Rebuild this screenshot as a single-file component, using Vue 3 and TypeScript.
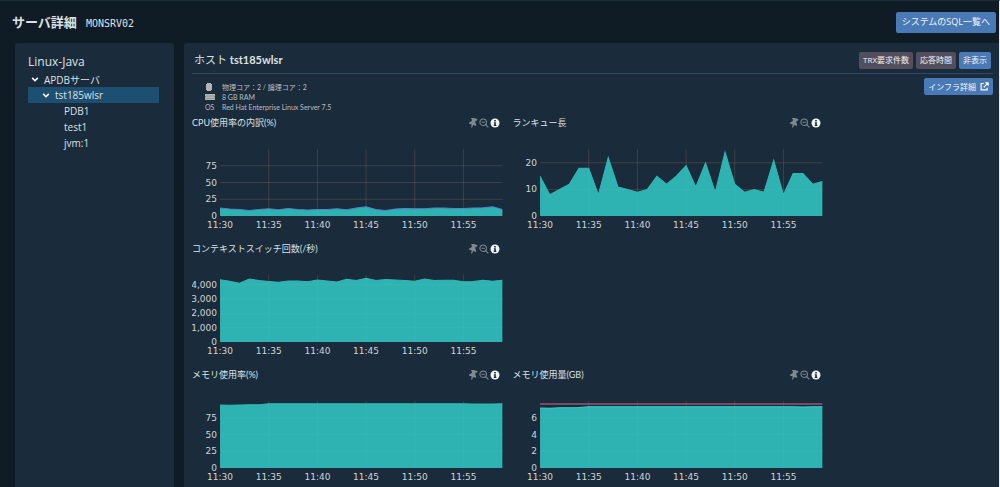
<script setup lang="ts">
interface Chart {
  id: string
  title: string
  ticks: number[]
  max: number
  values: number[]
  stroke: string
  limit?: number
  startsRow?: boolean
}

const memory = [94, 93.6, 94.2, 94.4, 94.5, 96, 96, 96, 96, 96, 96, 96, 96, 96, 96, 96, 96, 96, 96, 96, 96, 95.8, 95.8, 95.9, 96, 95.8, 95.6, 95.4, 95.6, 95.8]

const charts: Chart[] = [
  {
    id: 'cpu',
    title: 'CPU使用率の内訳(%)',
    ticks: [0, 25, 50, 75],
    max: 100,
    values: [12, 10.5, 10, 8.5, 10, 11, 9.5, 11.5, 10, 9, 10, 10, 11, 9.5, 12, 14, 10, 8.5, 10.5, 11.5, 11, 11, 12, 12, 11.5, 11.5, 12, 12.5, 14, 10],
    stroke: '#4f86c6',
  },
  {
    id: 'queue',
    title: 'ランキュー長',
    ticks: [0, 10, 20],
    max: 25.2,
    values: [15, 8, 10, 12, 18, 18, 8, 22, 11, 10, 9, 10, 15, 12, 15, 19, 11, 20, 9, 24, 12, 9, 10, 9, 21, 8, 16, 16, 12, 13],
    stroke: '#2fb7b6',
  },
  {
    id: 'context',
    title: 'コンテキストスイッチ回数(/秒)',
    ticks: [0, 1000, 2000, 3000, 4000],
    max: 4680,
    values: [4350, 4250, 4100, 4400, 4300, 4230, 4170, 4270, 4270, 4220, 4340, 4270, 4200, 4390, 4300, 4450, 4300, 4370, 4340, 4300, 4250, 4400, 4300, 4310, 4320, 4220, 4230, 4310, 4250, 4320],
    stroke: '#2fb7b6',
  },
  {
    id: 'memory-rate',
    title: 'メモリ使用率(%)',
    ticks: [0, 25, 50, 75],
    max: 100,
    values: memory,
    stroke: '#2fb7b6',
    startsRow: true,
  },
  {
    id: 'memory-size',
    title: 'メモリ使用量(GB)',
    ticks: [0, 2, 4, 6],
    max: 8,
    values: memory.map((v) => (v * 7.64) / 100),
    stroke: '#35d3d0',
    limit: 7.64,
  },
]

const LEFT = 28
const RIGHT = 310
const TOP = 18
const BASE = 85
const step = (RIGHT - LEFT) / 29

const times = ['11:30', '11:35', '11:40', '11:45', '11:50', '11:55']
const timeX = (i: number) => LEFT + i * 5 * step
const valueY = (c: Chart, v: number) => BASE - (v / c.max) * (BASE - TOP)
const line = (c: Chart) =>
  c.values.map((v, i) => `${(LEFT + i * step).toFixed(1)},${valueY(c, v).toFixed(1)}`).join(' ')
const area = (c: Chart) => `${LEFT},${BASE} ${line(c)} ${RIGHT},${BASE}`
</script>

<template>
  <div class="page">
    <header class="top">
      <h1>サーバ詳細</h1>
      <span class="server">MONSRV02</span>
      <button type="button" class="btn large">システムのSQL一覧へ</button>
    </header>

    <div class="body">
      <nav class="side" aria-label="サーバ">
        <h2>Linux-Java</h2>
        <ul class="tree">
          <li>
            <a href="#apdb" class="node l1">
              <svg class="chev" viewBox="0 0 10 8" aria-hidden="true"><path d="M1.500 2 5 5.500 8.500 2" /></svg>APDBサーバ
            </a>
          </li>
          <li>
            <a href="#host" class="node l2 selected" aria-current="true">
              <svg class="chev" viewBox="0 0 10 8" aria-hidden="true"><path d="M1.500 2 5 5.500 8.500 2" /></svg>tst185wlsr
            </a>
          </li>
          <li><a href="#pdb1" class="node l3">PDB1</a></li>
          <li><a href="#test1" class="node l3">test1</a></li>
          <li><a href="#jvm1" class="node l3">jvm:1</a></li>
        </ul>
      </nav>

      <main class="panel">
        <div class="host">
          <h2>ホスト <b>tst185wlsr</b></h2>
          <div class="group">
            <button type="button" class="btn muted">TRX要求件数</button>
            <button type="button" class="btn muted">応答時間</button>
            <button type="button" class="btn">非表示</button>
          </div>
        </div>

        <div class="info">
          <ul class="specs">
            <li>
              <span class="mark"><svg viewBox="0 0 8 8" class="spec-icon" aria-hidden="true"><path d="M2 0h4v1h1v6H6v1H2V7H1V1h1z" /></svg></span>
              物理コア：2 / 論理コア：2
            </li>
            <li>
              <span class="mark"><svg viewBox="0 0 10 8" class="spec-icon wide" aria-hidden="true"><path d="M0 1h10v2l-.6.7.6.7V7H0V4.400l.6-.7L0 3z" /><path class="chip" d="M2 2v2M4 2v2M6 2v2M8 2v2M0 5.500h10" /></svg></span>
              8 GB RAM
            </li>
            <li><span class="mark">OS</span>Red Hat Enterprise Linux Server 7.5</li>
          </ul>
          <button type="button" class="btn infra">
            インフラ詳細
            <svg class="ext" viewBox="0 0 12 12" aria-hidden="true"><path d="M5 2H1.500v8.500h8V7.500M7 1.200h3.800V5M10.500 1.500 5 7" /></svg>
          </button>
        </div>

        <div class="charts">
          <section v-for="c in charts" :key="c.id" class="chart" :class="{ first: c.startsRow }">
            <div class="chart-head">
              <h3>{{ c.title }}</h3>
              <button type="button" class="tool" aria-label="固定">
                <svg viewBox="0 0 512 512" class="icon"><path transform="rotate(18 256 256) translate(64 0)" d="M298 214 286 96h42c13 0 24-11 24-24V24c0-13-11-24-24-24H56C43 0 32 11 32 24v48c0 13 11 24 24 24h42L86 214C37 237 0 277 0 328c0 13 11 24 24 24h136v104l25 52c3 5 11 5 14 0l25-52V352h136c13 0 24-11 24-24 0-51-38-91-86-114z" /></svg>
              </button>
              <button type="button" class="tool" aria-label="縮小">
                <svg viewBox="0 0 12 12" class="icon zoom"><circle cx="5" cy="5" r="3.900" /><path d="M8 8l3.300 3.300M3.200 5h3.600" /></svg>
              </button>
              <button type="button" class="tool" aria-label="情報">
                <svg viewBox="0 0 12 12" class="icon about"><circle cx="6" cy="6" r="5.400" /><path d="M5 2.500h2v1.700H5zM4.600 5H7v3.200h.6v1.300H4.500V8.200h.6V6.200h-.5z" /></svg>
              </button>
            </div>
            <svg class="plot" viewBox="0 0 320 98" role="img" :aria-label="c.title">
              <line v-for="t in c.ticks.slice(1)" :key="'h' + t" class="grid" :x1="LEFT" :x2="RIGHT" :y1="valueY(c, t)" :y2="valueY(c, t)" />
              <line v-for="i in 5" :key="'v' + i" class="grid" :x1="timeX(i)" :x2="timeX(i)" :y1="TOP" :y2="BASE" />
              <polygon class="area" :points="area(c)" />
              <polyline class="edge" :points="line(c)" :stroke="c.stroke" />
              <line v-if="c.limit" class="limit" :x1="LEFT" :x2="RIGHT" :y1="valueY(c, c.limit)" :y2="valueY(c, c.limit)" />
              <text v-for="t in c.ticks" :key="'y' + t" class="tick y" :x="LEFT - 3" :y="valueY(c, t) + 3">{{ t.toLocaleString('en-US') }}</text>
              <text v-for="(t, i) in times" :key="t" class="tick x" :x="timeX(i)" :y="BASE + 12">{{ t }}</text>
            </svg>
          </section>
        </div>
      </main>
    </div>
  </div>
</template>

<style>
body {
  margin: 0;
  background: #101c25;
}
</style>

<style scoped>
.page {
  box-sizing: border-box;
  min-height: 100vh;
  display: flex;
  flex-direction: column;
  border-top: 1px solid #1a2c3b;
  border-right: 1px solid #e8ecee;
  background: #101c25;
  color: #dde1e4;
  font-family: "Open Sans", "Noto Sans CJK JP", sans-serif;
}
h1, h2, h3, ul {
  margin: 0;
  padding: 0;
  font-weight: 400;
  list-style: none;
}
.top {
  height: 42px;
  display: flex;
  align-items: center;
  padding: 0 3px 0 12px;
}
h1 {
  font-size: 13px;
  font-weight: 700;
  line-height: 20px;
}
.server {
  flex: 1;
  margin-left: 9px;
  padding-top: 3px;
  font: 10px/16px "DejaVu Sans Mono", monospace;
}
.btn {
  display: inline-flex;
  align-items: center;
  height: 17px;
  padding: 0 4px;
  border: 0;
  border-radius: 2px;
  background: #4a7ab5;
  color: #f2f5f8;
  font: 8px/16px "Open Sans", "Noto Sans CJK JP", sans-serif;
  white-space: nowrap;
}
.btn.muted {
  background: #524e5e;
}
.btn.large {
  height: 21px;
  padding: 0 6px;
  font-size: 9px;
}
.body {
  flex: 1;
  display: flex;
  gap: 10px;
}
.side {
  box-sizing: border-box;
  flex: 0 0 159px;
  margin-left: 15px;
  padding: 10px 15px 10px 13px;
  background: #1a2c3b;
  border-radius: 3px 3px 0 0;
}
.side h2 {
  font-size: 12px;
  line-height: 18px;
}
.node {
  display: flex;
  align-items: center;
  height: 16px;
  color: inherit;
  font-size: 10px;
  text-decoration: none;
}
.l1 { padding-left: 3px; }
.l2 { padding-left: 14px; }
.l3 { padding-left: 36px; }
.selected {
  background: #1c4f71;
}
.chev {
  width: 8px;
  height: 7px;
  margin-right: 5px;
  fill: none;
  stroke: #fff;
  stroke-width: 2;
}
.panel {
  flex: 1;
  min-width: 0;
  padding: 0 6px 0 8px;
  background: #1a2c3b;
  border-radius: 3px 0 0 0;
}
.host {
  display: flex;
  align-items: center;
  height: 31px;
  padding: 4px 2px 0 2px;
  box-sizing: border-box;
  border-bottom: 1px solid #2f4764;
}
.host h2 {
  flex: 1;
  font-family: Lato, "Noto Sans CJK JP", sans-serif;
  font-size: 11px;
  line-height: 16px;
}
.host b {
  font-weight: 700;
}
.group {
  display: flex;
  gap: 3px;
}
.info {
  display: flex;
  align-items: flex-start;
  justify-content: space-between;
  height: 41px;
}
.specs {
  padding: 8px 0 0 13px;
  font-family: Lato, "Noto Sans CJK JP", sans-serif;
  font-size: 7px;
  line-height: 10px;
  color: #b9bfc4;
}
.specs li {
  display: flex;
}
.mark {
  display: flex;
  align-items: center;
  width: 17px;
}
.spec-icon {
  width: 8px;
  height: 8px;
  fill: #b4b4b2;
}
.spec-icon.wide {
  width: 10px;
}
.chip {
  fill: none;
  stroke: #7d868c;
  stroke-width: 0.6;
}
.infra {
  gap: 4px;
  margin-top: 4px;
}
.ext {
  width: 9px;
  height: 9px;
  fill: none;
  stroke: #fff;
  stroke-width: 1.6;
}
.charts {
  display: grid;
  grid-template-columns: 40% 40%;
  row-gap: 12px;
}
.first {
  grid-column-start: 1;
}
.chart-head {
  display: flex;
  align-items: center;
  height: 16px;
  padding-right: 12px;
}
h3 {
  flex: 1;
  font-family: Lato, "Noto Sans CJK JP", sans-serif;
  font-size: 9px;
  line-height: 16px;
}
.tool {
  display: flex;
  padding: 0;
  margin-left: 1px;
  border: 0;
  background: none;
}
.icon {
  width: 10px;
  height: 10px;
  fill: #7f898f;
}
.zoom {
  fill: none;
  stroke: #7f898f;
  stroke-width: 1.3;
}
.about {
  fill: #f2f5f6;
}
.about path {
  fill: #1a2c3b;
}
.plot {
  display: block;
  width: 100%;
  height: auto;
}
.area {
  fill: #31c8c4;
  fill-opacity: 0.87;
}
.edge {
  fill: none;
}
.limit {
  stroke: #9a5578;
  stroke-width: 1.5;
}
.grid {
  stroke: rgba(160, 115, 85, 0.28);
}
.tick {
  fill: #d0d4d6;
  font: 9px "DejaVu Sans", sans-serif;
}
.y {
  text-anchor: end;
}
.x {
  text-anchor: middle;
}
</style>
